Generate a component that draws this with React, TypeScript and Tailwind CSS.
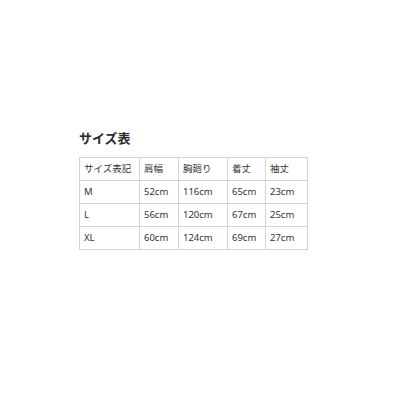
const rows = [
  ["M", "52cm", "116cm", "65cm", "23cm"],
  ["L", "56cm", "120cm", "67cm", "25cm"],
  ["XL", "60cm", "124cm", "69cm", "27cm"],
]

const headers = ["サイズ表記", "肩幅", "胸廻り", "着丈", "袖丈"]
const widths = ["w-[60px]", "w-[39px]", "w-[49px]", "w-[38px]", "w-[42px]"]

export default function App() {
  return (
    <div
      className="w-[400px] h-[400px] bg-white text-[#333] pt-[128px] pl-[79px]"
      style={{ fontFamily: '"Noto Sans", "Noto Sans CJK JP", sans-serif' }}
    >
      <h2 className="text-[13px] font-bold leading-[20px] text-[#2a2a2a]">サイズ表</h2>
      <table className="mt-[9px] border-collapse text-[9.5px] leading-none">
        <thead>
          <tr>
            {headers.map((h, i) => (
              <th key={h} className={`${widths[i]} h-[23px] border border-[#d4d4d4] pl-[4px] text-left font-normal`}>
                {h}
              </th>
            ))}
          </tr>
        </thead>
        <tbody>
          {rows.map((r) => (
            <tr key={r[0]}>
              {r.map((c, i) => (
                <td key={i} className={`${widths[i]} h-[23px] border border-[#d4d4d4] pl-[4px]`}>
                  {c}
                </td>
              ))}
            </tr>
          ))}
        </tbody>
      </table>
    </div>
  )
}
